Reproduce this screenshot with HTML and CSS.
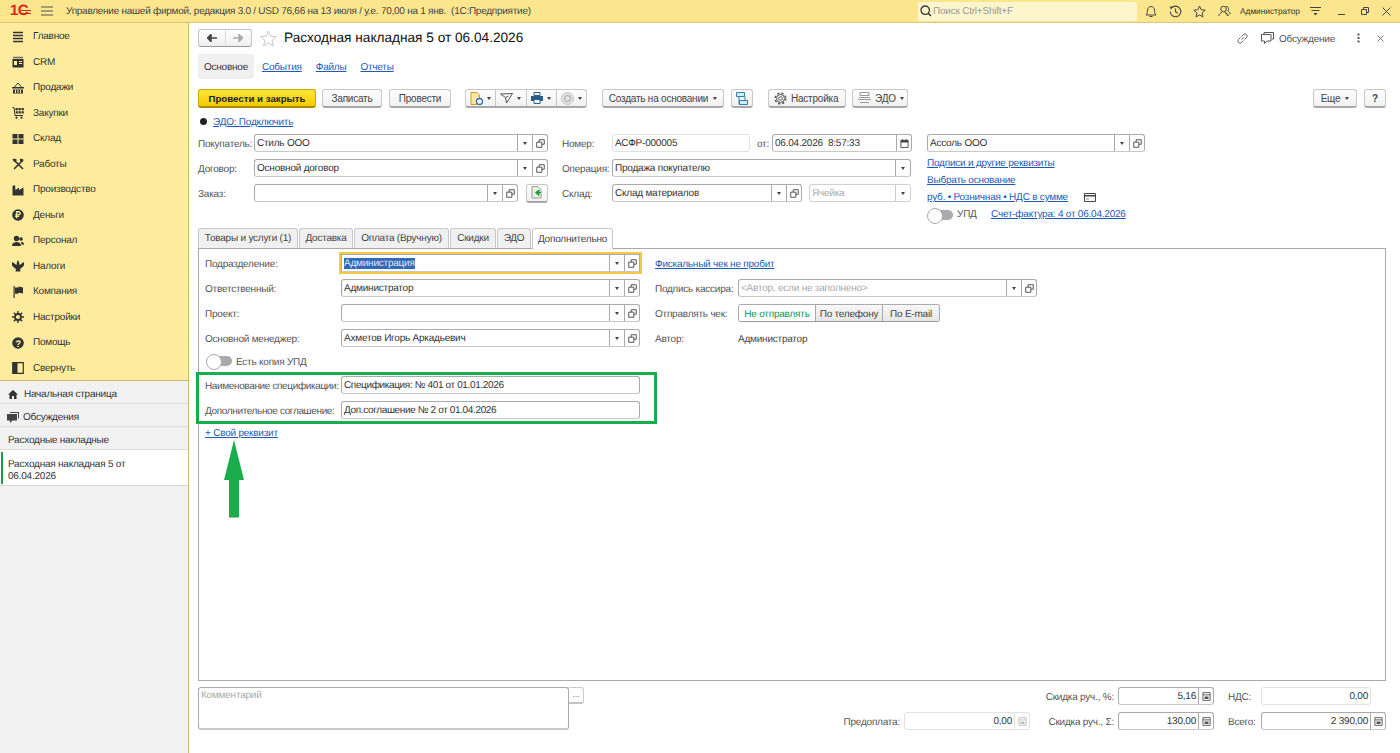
FILE: index.html
```html
<!DOCTYPE html>
<html lang="ru">
<head>
    <meta charset="UTF-8">
    <meta name="viewport" content="width=device-width, initial-scale=1.0">
    <title>Расходная накладная 5 от 06.04.2026</title>
    <link rel="stylesheet" href="styles.css">
</head>
<body>
    <!-- Общие значки -->
    <svg class="sprite" xmlns="http://www.w3.org/2000/svg">
        <symbol id="i-open" viewBox="0 0 10 10"><path d="M3.5 3.5V.8h5.7v5H6.5M.8 3.5h5.7v5.7H.8z" fill="none" stroke="#444" stroke-width="1"/></symbol>
        <symbol id="i-calc" viewBox="0 0 10 10"><path d="M1 .7h8v8.6H1zM1 3.2h8" fill="none" stroke="currentColor" stroke-width="1"/><path d="M2.8 5h4.4v2.8H2.8z" fill="currentColor"/></symbol>
    </svg>

    <header class="topbar">
        <div class="logo">1С<span class="logo-lines"></span></div>
        <svg class="burger" width="12" height="10" viewBox="0 0 12 10"><path d="M0 1h12M0 5h12M0 9h12" stroke="#555" stroke-width="1"/></svg>
        <div class="app-title">Управление нашей фирмой, редакция 3.0 / USD 76,66 на 13 июля / у.е. 70,00 на 1 янв.  (1С:Предприятие)</div>
        <div class="search">
            <svg width="12" height="12" viewBox="0 0 12 12"><circle cx="5.2" cy="5.2" r="4.2" fill="none" stroke="#333" stroke-width="1.3"/><path d="M8.3 8.3L11 11" stroke="#333" stroke-width="1.5"/></svg>
            <span>Поиск Ctrl+Shift+F</span>
        </div>
        <div class="top-icons">
            <svg class="ti-bell" width="12" height="13" viewBox="0 0 12 13"><path d="M1 10c1.5-1.500 1.300-3 1.500-5C2.700 3 4 1.500 6 1.500S9.300 3 9.500 5c.2 2 0 3.500 1.500 5zM4.500 11.500h3" fill="none" stroke="#444" stroke-width="1"/></svg>
            <svg class="ti-hist" width="13" height="13" viewBox="0 0 13 13"><path d="M2.300 3.200A5.300 5.300 0 1 1 1.200 6.500M6.500 3.500v3.300l2.200 1.400" fill="none" stroke="#444" stroke-width="1.100"/><path d="M.8 1.500l3.300.3-2.300 2.700z" fill="#444"/></svg>
            <svg class="ti-star" width="13" height="13" viewBox="0 0 13 13"><path d="M6.500 1l1.700 3.700 4 .5-3 2.700.8 4-3.500-2-3.500 2 .8-4-3-2.700 4-.5z" fill="none" stroke="#444" stroke-width="1"/></svg>
            <svg class="ti-users" width="13" height="13" viewBox="0 0 13 13"><circle cx="5.500" cy="4" r="2.800" fill="none" stroke="#444"/><path d="M.8 11c.3-2.300 2-3 3.200-3.600M7 7.400c1.200.6 2.900 1.300 3.200 3.600zM8 1.500c2.300-.5 3.300 2.700 1.800 4.500 1 .6 2.200 1.200 2.500 3.200" fill="none" stroke="#444"/></svg>
            <span class="user-name">Администратор</span>
            <svg class="ti-menu" width="11" height="9" viewBox="0 0 11 9"><path d="M0 .5h11M1.500 3.500h8" stroke="#444"/><path d="M3.500 6h4L5.500 8.500z" fill="#444"/></svg>
            <svg class="ti-min" width="7" height="7" viewBox="0 0 7 7"><path d="M0 6.500h7" stroke="#444"/></svg>
            <svg class="ti-restore" width="8" height="8" viewBox="0 0 8 8"><path d="M2.500 2V.5h5v5H6M.5 2.500h5v5h-5z" fill="none" stroke="#444"/></svg>
            <svg class="ti-close" width="9" height="9" viewBox="0 0 9 9"><path d="M.5.500l8 8M8.500.500l-8 8" stroke="#444"/></svg>
        </div>
    </header>

    <div class="app">
        <aside class="sidebar">
            <nav class="sections">
                <a class="section"><svg viewBox="0 0 12 12"><path d="M1 1.500h10M1 4.500h10M1 7.500h10M1 10.500h10" stroke="#333" stroke-width="1.500"/></svg>Главное</a>
                <a class="section"><svg viewBox="0 0 12 12"><path d="M1 .8h10v1.500H1z" fill="#666"/><path d="M.5 3h11v8.500H.5z" fill="#333"/><path d="M2 5h3v4H2z" fill="#fdeea0"/><path d="M7 5.500h3M7 7.500h3" stroke="#fdeea0"/></svg>CRM</a>
                <a class="section"><svg viewBox="0 0 12 12"><path d="M0 5h12v1.500H0zM1 7.500h10v4H1z" fill="#333"/><path d="M2.500 5l3.500-4 3.500 4" fill="none" stroke="#333"/><path d="M3.500 8v3M6 8v3M8.500 8v3" stroke="#fdeea0"/></svg>Продажи</a>
                <a class="section"><svg viewBox="0 0 12 12"><path d="M.5 .5h1.500l1 8h8" fill="none" stroke="#333" stroke-width="1"/><path d="M3.500 1h2.300v2.300H3.500zM6.500 1h2.300v2.300H6.500zM9.500 1h2.300v2.300H9.500zM3.800 4.300h2v2.300h-2zM6.500 4.300h2.300v2.300H6.500zM9.500 4.300h2.300v2.300H9.500z" fill="#333"/><circle cx="4.500" cy="10.700" r="1.100" fill="#333"/><circle cx="9.500" cy="10.700" r="1.100" fill="#333"/></svg>Закупки</a>
                <a class="section"><svg viewBox="0 0 12 12"><path d="M.5 1h5v4.500h-5zM6.500 1h5v4.500h-5zM.5 6.500h5V11h-5zM6.500 6.500h5V11h-5z" fill="#333"/></svg>Склад</a>
                <a class="section"><svg viewBox="0 0 12 12"><path d="M1 1l10 10M11 2L2 11" stroke="#333" stroke-width="1.600"/><path d="M1 3l2-2.500L5 2 3 4zM8 .5l3.500 1-1 2.500-2.500-1z" fill="#333"/></svg>Работы</a>
                <a class="section"><svg viewBox="0 0 12 12"><path d="M.5 11.500V2l2.500-1 .5 5 3.500-2.500V6l4.500-2.500v8z" fill="#333"/></svg>Производство</a>
                <a class="section"><svg viewBox="0 0 12 12"><circle cx="6" cy="6" r="5.800" fill="#333"/><text x="6" y="9.300" class="icon-sign" fill="#fdeea0">₽</text></svg>Деньги</a>
                <a class="section"><svg viewBox="0 0 12 12"><circle cx="4.500" cy="3.500" r="2.700" fill="#333"/><path d="M0 11c0-3 2-4 4.500-4S9 8 9 11z" fill="#333"/><circle cx="9" cy="4" r="1.800" fill="#333"/><path d="M9 6.700c2 0 3 1 3 3h-2.300z" fill="#333"/></svg>Персонал</a>
                <a class="section"><svg viewBox="0 0 12 12"><path d="M6 0l1 2 .5 3 3.500-2.500L12 2v3.500L9.500 8 8 9l.5 2.500h-5L4 9 2.500 8 0 5.500V2l1 .5L4.500 5 5 2z" fill="#333"/></svg>Налоги</a>
                <a class="section"><svg viewBox="0 0 12 12"><path d="M1.500 0h1.200v12H1.500z" fill="#333"/><path d="M3 1.500h3L7 .5l4 1v6l-4-.8-1 1H3z" fill="#333"/></svg>Компания</a>
                <a class="section"><svg viewBox="0 0 12 12"><circle cx="6" cy="6" r="3" fill="none" stroke="#333" stroke-width="1.800"/><path d="M6 0v2.500M6 9.500V12M0 6h2.500M9.500 6H12M1.800 1.800l1.800 1.800M8.400 8.400l1.800 1.800M10.200 1.800L8.400 3.600M3.600 8.400l-1.800 1.800" stroke="#333" stroke-width="1.400"/></svg>Настройки</a>
                <a class="section"><svg viewBox="0 0 12 12"><circle cx="6" cy="6" r="5.800" fill="#333"/><text x="6" y="9.500" class="icon-sign" fill="#fdeea0">?</text></svg>Помощь</a>
                <a class="section"><svg viewBox="0 0 12 12"><path d="M.7.700h10.600v10.600H.7z" fill="none" stroke="#333" stroke-width="1.200"/><path d="M1 1h4.500v10H1z" fill="#333"/></svg>Свернуть</a>
            </nav>
            <div class="open-list">
                <a class="open-row with-icon"><svg width="10" height="9" viewBox="0 0 10 9"><path d="M5 0l5 4.500H8.500V9H6V6H4v3H1.500V4.500H0z" fill="#333"/></svg>Начальная страница</a>
                <a class="open-row with-icon chat"><svg width="12" height="11" viewBox="0 0 12 11"><path d="M3 0h9v6.500h-1V1H3z" fill="#444"/><path d="M0 2h10v6.500H5.500L3 11V8.500H0z" fill="#444"/></svg>Обсуждения</a>
                <a class="open-row list-row">Расходные накладные</a>
                <a class="open-row active-doc">Расходная накладная 5 от 06.04.2026</a>
            </div>
        </aside>

        <main class="form">
            <div class="doc-head">
                <div class="nav-arrows">
                    <span class="arrow-btn"><svg width="10" height="8" viewBox="0 0 10 8"><path d="M10 4H3M4 .5L.5 4 4 7.500z" fill="#444" stroke="#444" stroke-width="1.500"/></svg></span>
                    <span class="arrow-btn"><svg width="10" height="8" viewBox="0 0 10 8"><path d="M0 4h7M6 .5L9.500 4 6 7.500z" fill="#aaa" stroke="#aaa" stroke-width="1.500"/></svg></span>
                </div>
                <svg class="fav-star" width="17" height="17" viewBox="0 0 17 17"><path d="M8.500 1l2.200 5.200 5.600.5-4.200 3.700 1.300 5.500-4.900-2.900-4.900 2.900 1.300-5.500L.7 6.700l5.600-.5z" fill="none" stroke="#c8c8c8"/></svg>
                <h1 class="doc-title">Расходная накладная 5 от 06.04.2026</h1>
                <div class="head-right">
                    <svg class="link-ic" width="11" height="11" viewBox="0 0 11 11"><path d="M4.500 6.500l2-2M3.500 4.500L1.500 6.500a2 2 0 0 0 3 3l2-2M7.500 6.500l2-2a2 2 0 0 0-3-3l-2 2" fill="none" stroke="#666"/></svg>
                    <svg class="chat-ic" width="13" height="12" viewBox="0 0 13 12"><path d="M3 2V.5h9.500V7H11M.5 2.500h9.500V9H6l-2.500 2.500V9h-3z" fill="none" stroke="#555"/></svg>
                    <span class="discuss">Обсуждение</span>
                    <svg class="kebab" width="3" height="10" viewBox="0 0 3 10"><path d="M.5.500h2v2h-2zM.5 4h2v2h-2zM.5 7.500h2v2h-2z" fill="#555"/></svg>
                    <svg class="close-doc" width="7" height="7" viewBox="0 0 7 7"><path d="M.5.500l6 6M6.500.500l-6 6" stroke="#777"/></svg>
                </div>
            </div>

            <div class="page-tabs">
                <a class="page-tab current">Основное</a>
                <a class="page-tab">События</a>
                <a class="page-tab">Файлы</a>
                <a class="page-tab">Отчеты</a>
            </div>

            <div class="toolbar">
                <button class="btn primary w-post">Провести и закрыть</button>
                <button class="btn w-save">Записать</button>
                <button class="btn w-conduct">Провести</button>
                <div class="btn-group">
                    <span class="group-item"><svg width="13" height="13" viewBox="0 0 13 13"><path d="M1 .5h6l2.500 2.500v4H7v5.500H1z" fill="#fbe6a0" stroke="#c9a227"/><circle cx="9.500" cy="9.500" r="3" fill="#fff" stroke="#2e6fb7" stroke-width="1.300"/></svg><i class="caret"></i></span>
                    <span class="group-item"><svg width="13" height="11" viewBox="0 0 13 11"><path d="M.5 1l12-.5-6 9.500-1-5.500zM5.500 4.500l3-1.500" fill="none" stroke="#555"/></svg><i class="caret"></i></span>
                    <span class="group-item"><svg width="12" height="12" viewBox="0 0 12 12"><path d="M3 .5h6v3H3z" fill="#fff" stroke="#2a5c8a"/><path d="M0 4h12v5H0z" fill="#2a5c8a"/><path d="M3 7.500h6v4H3z" fill="#fff" stroke="#2a5c8a"/></svg><i class="caret"></i></span>
                    <span class="group-item"><svg width="13" height="13" viewBox="0 0 13 13"><circle cx="6.500" cy="6.500" r="6" fill="#e4e4e4" stroke="#c4c4c4"/><circle cx="6.500" cy="6.500" r="3" fill="none" stroke="#bbb" stroke-width="1.500"/></svg><i class="caret"></i></span>
                </div>
                <button class="btn w-base">Создать на основании<i class="caret"></i></button>
                <button class="btn w-struct"><svg width="12" height="13" viewBox="0 0 12 13"><path d="M.5.500h8v4h-8zM3.500 8.500h8v4h-8zM3 4.500v8M9 4.500V8" fill="#d6eaf6" stroke="#2a80b4" stroke-width="1"/></svg></button>
                <button class="btn w-setup"><svg width="13" height="13" viewBox="0 0 13 13"><circle cx="6.500" cy="6.500" r="1.800" fill="none" stroke="#555"/><circle cx="6.500" cy="6.500" r="4" fill="none" stroke="#555"/><circle cx="6.500" cy="6.500" r="5.300" fill="none" stroke="#555" stroke-width="1.500" stroke-dasharray="2.200 2"/></svg>Настройка</button>
                <button class="btn w-edo"><svg width="13" height="12" viewBox="0 0 13 12"><path d="M2 .5h9v3H2zM1 5.500h11M0 7.500h13M2 10.500h9" fill="none" stroke="#999"/></svg>ЭДО<i class="caret"></i></button>
                <button class="btn w-more">Еще<i class="caret"></i></button>
                <button class="btn w-help"><b>?</b></button>
            </div>

            <div class="edo-row"><span class="dot"></span><a class="link">ЭДО: Подключить</a></div>

            <section class="head-fields">
                <div class="col col-buyer">
                    <div class="row">
                        <label>Покупатель:</label>
                        <div class="field grow"><span class="value">Стиль ООО</span><span class="fbtn"><i class="caret"></i></span><span class="fbtn"><svg><use href="#i-open"/></svg></span></div>
                    </div>
                    <div class="row">
                        <label>Договор:</label>
                        <div class="field grow"><span class="value">Основной договор</span><span class="fbtn"><i class="caret"></i></span><span class="fbtn"><svg><use href="#i-open"/></svg></span></div>
                    </div>
                    <div class="row">
                        <label>Заказ:</label>
                        <div class="field grow"><span class="value"></span><span class="fbtn"><i class="caret"></i></span><span class="fbtn"><svg><use href="#i-open"/></svg></span></div>
                        <button class="btn w-order"><svg width="12" height="13" viewBox="0 0 12 13"><path d="M1 .5h6l3 3V12H1z" fill="#e4f3dc" stroke="#9a9a9a"/><path d="M10 6.500H6M8 4L4.500 6.500 8 9.500z" fill="#1d9a3f" stroke="#1d9a3f"/></svg></button>
                    </div>
                </div>

                <div class="col col-doc">
                    <div class="row">
                        <label>Номер:</label>
                        <div class="field readonly w-number"><span class="value">АСФР-000005</span></div>
                        <span class="from">от:</span>
                        <div class="field w-date"><span class="value">06.04.2026  8:57:33</span><span class="fbtn"><svg class="date-ic" width="10" height="10" viewBox="0 0 10 10"><path d="M1 1.500h8v8H1z" fill="none" stroke="#444"/><path d="M1 1.500h8v2.500H1zM2.500 0h1v2h-1zM6.500 0h1v2h-1z" fill="#444"/></svg></span></div>
                    </div>
                    <div class="row">
                        <label>Операция:</label>
                        <div class="field w-operation"><span class="value">Продажа покупателю</span><span class="fbtn"><i class="caret"></i></span></div>
                    </div>
                    <div class="row">
                        <label>Склад:</label>
                        <div class="field w-stock"><span class="value">Склад материалов</span><span class="fbtn"><i class="caret"></i></span><span class="fbtn"><svg><use href="#i-open"/></svg></span></div>
                        <div class="field soft w-cell"><span class="value hint">Ячейка</span><span class="fbtn"><i class="caret"></i></span></div>
                    </div>
                </div>

                <div class="col col-org">
                    <div class="field"><span class="value">Ассоль ООО</span><span class="fbtn"><i class="caret"></i></span><span class="fbtn"><svg><use href="#i-open"/></svg></span></div>
                    <div class="org-links">
                        <div class="org-line"><a class="link">Подписи и другие реквизиты</a></div>
                        <div class="org-line"><a class="link">Выбрать основание</a></div>
                        <div class="org-line"><a class="link">руб. • Розничная • НДС в сумме</a><svg class="card-ic" width="12" height="9" viewBox="0 0 12 9"><path d="M.5.500h11v8H.5z" fill="none" stroke="#444"/><path d="M.5 2h11v1.500H.5z" fill="#444"/><path d="M2 6h3" stroke="#888"/></svg></div>
                        <div class="org-line"><span class="switch"></span><span class="upd">УПД</span><a class="link">Счет-фактура: 4 от 06.04.2026</a></div>
                    </div>
                </div>
            </section>

            <div class="tabs">
                <a class="tab t1">Товары и услуги (1)</a>
                <a class="tab t2">Доставка</a>
                <a class="tab t3">Оплата (Вручную)</a>
                <a class="tab t4">Скидки</a>
                <a class="tab t5">ЭДО</a>
                <a class="tab t6 selected">Дополнительно</a>
            </div>

            <section class="panel">
                <div class="panel-grid">
                    <div class="row">
                        <label class="lbl-wide">Подразделение:</label>
                        <div class="field focused grow"><span class="value"><mark>Администрация</mark></span><span class="fbtn"><i class="caret"></i></span><span class="fbtn"><svg><use href="#i-open"/></svg></span></div>
                    </div>
                    <div class="row"><a class="link">Фискальный чек не пробит</a></div>

                    <div class="row">
                        <label class="lbl-wide">Ответственный:</label>
                        <div class="field grow"><span class="value">Администратор</span><span class="fbtn"><i class="caret"></i></span><span class="fbtn"><svg><use href="#i-open"/></svg></span></div>
                    </div>
                    <div class="row">
                        <label class="lbl-right">Подпись кассира:</label>
                        <div class="field w-cashier"><span class="value hint">&lt;Автор, если не заполнено&gt;</span><span class="fbtn"><i class="caret"></i></span><span class="fbtn"><svg><use href="#i-open"/></svg></span></div>
                    </div>

                    <div class="row">
                        <label class="lbl-wide">Проект:</label>
                        <div class="field grow"><span class="value"></span><span class="fbtn"><i class="caret"></i></span><span class="fbtn"><svg><use href="#i-open"/></svg></span></div>
                    </div>
                    <div class="row">
                        <label class="lbl-right">Отправлять чек:</label>
                        <div class="segments">
                            <span class="segment on">Не отправлять</span>
                            <span class="segment">По телефону</span>
                            <span class="segment">По E-mail</span>
                        </div>
                    </div>

                    <div class="row">
                        <label class="lbl-wide">Основной менеджер:</label>
                        <div class="field grow"><span class="value">Ахметов Игорь Аркадьевич</span><span class="fbtn"><i class="caret"></i></span><span class="fbtn"><svg><use href="#i-open"/></svg></span></div>
                    </div>
                    <div class="row">
                        <label class="lbl-right">Автор:</label>
                        <span class="plain">Администратор</span>
                    </div>
                </div>

                <div class="copy-row"><span class="switch"></span><span class="copy-label">Есть копия УПД</span></div>

                <div class="custom-box">
                    <div class="row">
                        <label class="lbl-wide">Наименование спецификации:</label>
                        <div class="field w-custom"><span class="value">Спецификация: № 401 от 01.01.2026</span></div>
                    </div>
                    <div class="row">
                        <label class="lbl-wide">Дополнительное соглашение:</label>
                        <div class="field w-custom"><span class="value">Доп.соглашение № 2 от 01.04.2026</span></div>
                    </div>
                </div>

                <a class="link own-attr">+ Свой реквизит</a>

                <svg class="big-arrow" width="20" height="78" viewBox="0 0 20 78"><path d="M10 0L20 40H15V77.500H5V40H0z" fill="#1aad4b"/></svg>
            </section>

            <section class="footer">
                <div class="comment">
                    <div class="comment-box">Комментарий</div>
                    <span class="comment-more">...</span>
                </div>
                <div class="totals">
                    <span class="t-spacer"></span>
                    <span class="t-spacer"></span>
                    <label class="t-lbl">Скидка руч., %:</label>
                    <div class="field"><span class="value num">5,16</span><span class="fbtn"><svg class="calc"><use href="#i-calc"/></svg></span></div>
                    <label class="t-lbl left">НДС:</label>
                    <div class="field readonly w-vat"><span class="value num">0,00</span></div>

                    <label class="t-lbl">Предоплата:</label>
                    <div class="field readonly"><span class="value num">0,00</span><span class="fbtn pale"><svg class="calc"><use href="#i-calc"/></svg></span></div>
                    <label class="t-lbl">Скидка руч., Σ:</label>
                    <div class="field"><span class="value num">130,00</span><span class="fbtn"><svg class="calc"><use href="#i-calc"/></svg></span></div>
                    <label class="t-lbl left">Всего:</label>
                    <div class="field"><span class="value num">2 390,00</span><span class="fbtn"><svg class="calc"><use href="#i-calc"/></svg></span></div>
                </div>
            </section>
        </main>
    </div>
</body>
</html>
```

FILE: styles.css
```css
/* Общее */
* {
    margin: 0;
    padding: 0;
    box-sizing: border-box;
}

html,
body {
    height: 100%;
    overflow: hidden;
}

body {
    font-family: 'Liberation Sans', Arial, sans-serif;
    font-size: 10px;
    letter-spacing: -0.22px;
    text-rendering: geometricPrecision;
    color: #333;
    background-color: #fff;
}

.sprite {
    display: none;
}

.link {
    color: #1c5bb8;
    text-decoration: underline;
    white-space: nowrap;
}

.caret {
    display: inline-block;
    width: 0;
    height: 0;
    border-left: 2.5px solid transparent;
    border-right: 2.5px solid transparent;
    border-top: 3px solid #444;
}

/* Верхняя панель */
.topbar {
    display: flex;
    align-items: center;
    height: 23px;
    background-color: #fbe68e;
    border-bottom: 1px solid #d8c67a;
    padding-left: 10px;
}

.logo {
    position: relative;
    width: 21px;
    color: #d8261c;
    font-size: 15px;
    font-weight: bold;
    line-height: 14px;
    letter-spacing: -0.5px;
}

.logo-lines {
    position: absolute;
    left: 11px;
    top: 6px;
    width: 10px;
    height: 4px;
    border-top: 1px solid #d8261c;
    border-bottom: 1px solid #d8261c;
}

.burger {
    margin-left: 10px;
}

.app-title {
    margin-left: 13px;
    width: 852px;
    white-space: pre;
    letter-spacing: -0.26px;
    color: #444;
}

.search {
    display: flex;
    align-items: center;
    gap: 1px;
    width: 219px;
    height: 19px;
    padding-left: 2px;
    background-color: #fdf5cc;
    border-radius: 2px;
    color: #999;
}

.top-icons {
    display: flex;
    align-items: center;
}

.ti-bell { margin-left: 8px; }
.ti-hist { margin-left: 12px; }
.ti-star { margin-left: 11px; }
.ti-users { margin-left: 12px; }

.user-name {
    margin-left: 9px;
    font-size: 8.3px;
    letter-spacing: 0;
    color: #333;
}

.ti-menu { margin-left: 10px; }
.ti-min { margin-left: 17px; }
.ti-restore { margin-left: 16px; }
.ti-close { margin-left: 13px; }

.app {
    display: flex;
    height: 730px;
}

/* Левая колонка */
.sidebar {
    width: 189px;
    flex-shrink: 0;
    background-color: #f1f1f1;
    border-right: 1px solid #c8b96c;
}

.sections {
    background-color: #fdec9e;
    border-bottom: 1px solid #c8b96c;
    height: 358px;
}

.section {
    display: flex;
    align-items: center;
    height: 25.5px;
    padding: 2px 0 0 12px;
    color: #333;
}

.section svg {
    width: 12px;
    height: 12px;
    margin-right: 9px;
}

.icon-sign {
    font-size: 9.5px;
    font-weight: bold;
    text-anchor: middle;
}

.open-row {
    display: flex;
    align-items: center;
    padding: 4px 0 0 8px;
    height: 23px;
    border-bottom: 1px solid #ddd;
    color: #333;
}

.with-icon svg {
    margin-right: 6px;
}

.chat svg {
    margin-right: 4px;
    margin-left: -1px;
}

.active-doc {
    position: relative;
    height: 36px;
    line-height: 12px;
    padding: 6px 40px 0 8px;
    background-color: #fff;
    border-bottom: 1px solid #d5d5d5;
}

.active-doc::before {
    content: "";
    position: absolute;
    left: 1px;
    top: 2px;
    bottom: 1px;
    width: 2px;
    background-color: #1a9b4b;
}

/* Форма */
.form {
    flex: 1;
    min-width: 0;
    padding: 6px 14px 0 9px;
}

.doc-head {
    display: flex;
    align-items: center;
    height: 18px;
}

.nav-arrows {
    display: flex;
    width: 54px;
    height: 18px;
    border: 1px solid #c4c4c4;
    border-bottom-color: #999;
    border-radius: 3px;
    background: linear-gradient(#fff, #efefef);
}

.arrow-btn {
    flex: 1;
    display: flex;
    align-items: center;
    justify-content: center;
}

.arrow-btn + .arrow-btn {
    border-left: 1px solid #ddd;
}

.fav-star {
    margin-left: 8px;
}

.doc-title {
    margin-left: 7px;
    padding-bottom: 2px;
    font-size: 13.65px;
    letter-spacing: 0;
    font-weight: normal;
    color: #111;
    white-space: nowrap;
}

.head-right {
    display: flex;
    align-items: center;
    margin-left: auto;
    margin-right: 2px;
}

.chat-ic {
    margin-left: 13px;
}

.discuss {
    margin-left: 5px;
    padding-top: 2px;
    color: #555;
}

.kebab {
    margin-left: 22px;
}

.close-doc {
    margin-left: 17px;
}

.page-tabs {
    display: flex;
    align-items: center;
    margin-top: 7px;
    height: 25px;
}

.page-tab {
    padding-top: 2px;
    color: #1c5bb8;
    text-decoration: underline;
    margin-right: 14px;
}

.page-tab.current {
    width: 56px;
    height: 25px;
    padding-top: 0;
    line-height: 27px;
    text-align: center;
    margin-right: 8px;
    color: #333;
    text-decoration: none;
    background-color: #f0f0f0;
    border-radius: 3px;
}

/* Кнопки */
.toolbar {
    display: flex;
    margin-top: 10px;
    height: 19px;
}

.btn {
    display: inline-flex;
    align-items: center;
    justify-content: center;
    gap: 5px;
    height: 19px;
    font: inherit;
    letter-spacing: inherit;
    color: #444;
    background: linear-gradient(#fff, #f0f0f0);
    border: 1px solid #c8c8c8;
    border-bottom: 2px solid #a8a8a8;
    border-radius: 3px;
}

.btn.primary {
    background: linear-gradient(#ffe838, #f4c900);
    border-color: #c9a800;
    border-bottom-color: #a88c00;
    color: #222;
    font-weight: bold;
    font-size: 9.7px;
    letter-spacing: 0;
}

.w-post { width: 118px; }
.w-save { width: 60px; margin-left: 6px; }
.w-conduct { width: 62px; margin-left: 7px; }
.w-base { width: 122px; margin-left: 15px; }
.w-struct { width: 22px; margin-left: 7px; }
.w-setup { width: 78px; margin-left: 15px; justify-content: flex-start; padding-left: 5px; gap: 4px; }
.w-edo { width: 56px; margin-left: 6px; justify-content: flex-start; padding-left: 5px; gap: 4px; }
.w-more { width: 44px; margin-left: auto; }
.w-help { width: 22px; margin-left: 7px; }
.w-order { width: 22px; margin-left: 8px; height: 19px; }

.btn-group {
    display: flex;
    width: 122px;
    height: 19px;
    margin-left: 14px;
    background: linear-gradient(#fff, #f0f0f0);
    border: 1px solid #c8c8c8;
    border-bottom: 2px solid #a8a8a8;
    border-radius: 3px;
}

.group-item {
    flex: 1;
    display: flex;
    align-items: center;
    justify-content: center;
    gap: 4px;
}

.group-item + .group-item {
    border-left: 1px solid #c8c8c8;
}

.edo-row {
    display: flex;
    align-items: center;
    height: 14px;
    margin-top: 6px;
    padding-left: 2px;
}

.edo-row .link {
    padding-top: 2px;
}

.dot {
    width: 7px;
    height: 7px;
    border-radius: 50%;
    background-color: #222;
    margin-right: 6px;
}

/* Поля */
.head-fields {
    display: flex;
    margin-top: 6px;
    height: 89px;
}

.col {
    display: flex;
    flex-direction: column;
    gap: 7px;
}

.col-buyer { width: 350px; }
.col-doc { width: 350px; margin-left: 14px; }
.col-org { width: 218px; margin-left: 15px; gap: 0; }

.row {
    display: flex;
    align-items: center;
    height: 18px;
}

.row > .link,
.row > .plain,
.row > .from {
    padding-top: 2px;
}

label {
    flex-shrink: 0;
    padding-top: 2px;
    white-space: nowrap;
    color: #555;
}

.col-buyer label { width: 56px; }
.col-doc label { width: 50px; }

.field {
    display: flex;
    align-items: stretch;
    height: 18px;
    background-color: #fff;
    border: 1px solid #aaa;
    border-bottom-color: #c8c8c8;
    border-radius: 3px;
}

.grow {
    flex: 1;
    min-width: 0;
}

.value {
    flex: 1;
    min-width: 0;
    padding: 0 2px;
    line-height: 18px;
    white-space: pre;
    overflow: hidden;
}

.num {
    text-align: right;
}

.hint {
    color: #aaa;
}

.readonly {
    border-color: #e2e2e2;
}

.soft {
    border-color: #d0d0d0;
}

.fbtn {
    flex: 0 0 15px;
    display: flex;
    align-items: center;
    justify-content: center;
    border-left: 1px solid #aaa;
}

.soft .fbtn {
    border-left-color: #ccc;
}

.fbtn svg {
    width: 9px;
    height: 9px;
}

.fbtn svg.calc {
    color: #555;
}

.fbtn.pale {
    border-left-color: #e2e2e2;
}

.fbtn.pale svg.calc {
    color: #bbb;
}

.w-number { width: 138px; }
.w-date { width: 140px; }
.w-operation { width: 299px; }
.w-stock { width: 190px; }
.w-cell { width: 102px; margin-left: 7px; }

.from {
    width: 22px;
    padding-left: 7px;
    color: #555;
}

.org-links {
    margin-top: 3px;
}

.org-line {
    display: flex;
    align-items: center;
    height: 17px;
}

.card-ic {
    margin-left: 16px;
}

.switch {
    position: relative;
    display: inline-block;
    flex-shrink: 0;
    width: 26px;
    height: 14px;
}

.switch::before {
    content: "";
    position: absolute;
    left: 6px;
    right: 0;
    top: 2px;
    height: 10px;
    border-radius: 5px;
    background-color: #aaa;
}

.switch::after {
    content: "";
    position: absolute;
    left: 0;
    top: 0;
    width: 14px;
    height: 14px;
    border-radius: 50%;
    background-color: #fff;
    border: 1px solid #aaa;
}

.upd {
    margin-left: 4px;
    width: 34px;
    color: #555;
}

/* Вкладки */
.tabs {
    display: flex;
    gap: 1px;
    height: 20px;
    margin-top: 5px;
}

.tab {
    display: flex;
    align-items: center;
    justify-content: center;
    height: 20px;
    background-color: #f0f0f0;
    border: 1px solid #c8c8c8;
    border-bottom: none;
    border-radius: 3px 3px 0 0;
    color: #444;
    white-space: nowrap;
}

.tab.selected {
    position: relative;
    height: 21px;
    background-color: #fff;
    z-index: 1;
}

.t1 { width: 100px; }
.t2 { width: 54px; }
.t3 { width: 95px; }
.t4 { width: 46px; }
.t5 { width: 34px; }
.t6 { width: 81px; }

.panel {
    position: relative;
    height: 433px;
    border: 1px solid #aaa;
    padding: 5px 0 0 6px;
}

.panel-grid {
    display: grid;
    grid-template-columns: 435px 1fr;
    column-gap: 15px;
    row-gap: 7px;
}

.lbl-wide { width: 136px; }
.lbl-right { width: 83px; }

.focused {
    outline: 2px solid #f7c843;
    border-radius: 0;
}

mark {
    background-color: #3268b8;
    color: #dfe8f7;
}

.w-cashier { width: 299px; }
.w-custom { width: 299px; }

.segments {
    display: flex;
    height: 18px;
    border: 1px solid #aaa;
    border-bottom-color: #999;
    border-radius: 3px;
    overflow: hidden;
}

.segment {
    display: flex;
    align-items: center;
    justify-content: center;
    width: 67px;
    padding-top: 2px;
    background: linear-gradient(#f8f8f8, #e6e6e6);
    border-left: 1px solid #aaa;
    color: #444;
}

.segment.on {
    width: 76px;
    border-left: none;
    background: #fff;
    color: #0c9a4a;
}

.segment:last-child {
    width: 57px;
}

.plain {
    color: #444;
}

.copy-row {
    display: flex;
    align-items: center;
    height: 14px;
    margin-top: 7px;
    margin-left: 1px;
}

.copy-label {
    margin-left: 4px;
    padding-top: 2px;
    color: #555;
}

.custom-box {
    display: flex;
    flex-direction: column;
    gap: 7px;
    width: 461px;
    height: 52px;
    margin: 4px 0 0 -9px;
    padding: 1px 0 0 6px;
    border: 3px solid #1aad4b;
    letter-spacing: -0.36px;
}

.own-attr {
    display: block;
    width: fit-content;
    margin-top: 3px;
    line-height: 14px;
}

.big-arrow {
    position: absolute;
    left: 25px;
    top: 191px;
}

/* Низ формы */
.footer {
    display: flex;
    margin-top: 6px;
}

.comment {
    display: flex;
    align-items: flex-start;
    width: 386px;
}

.comment-box {
    width: 371px;
    height: 43px;
    padding: 2px;
    color: #aaa;
    border: 1px solid #aaa;
    border-bottom: 2px solid #c8c8c8;
    border-radius: 3px;
}

.comment-more {
    width: 15px;
    height: 17px;
    line-height: 13px;
    text-align: center;
    color: #888;
    border: 1px solid #ccc;
    border-left: none;
    border-bottom: 2px solid #c4c4c4;
    border-radius: 0 3px 3px 0;
}

.totals {
    display: grid;
    grid-template-columns: 60px 126px 88px 96px 47px 125px;
    grid-auto-rows: 18px;
    row-gap: 7px;
    margin-left: auto;
}

.t-lbl {
    display: flex;
    align-items: center;
    justify-content: flex-end;
    padding-right: 4px;
}

.t-lbl.left {
    justify-content: flex-start;
    padding-left: 14px;
}

.w-vat {
    width: 110px;
}
```
